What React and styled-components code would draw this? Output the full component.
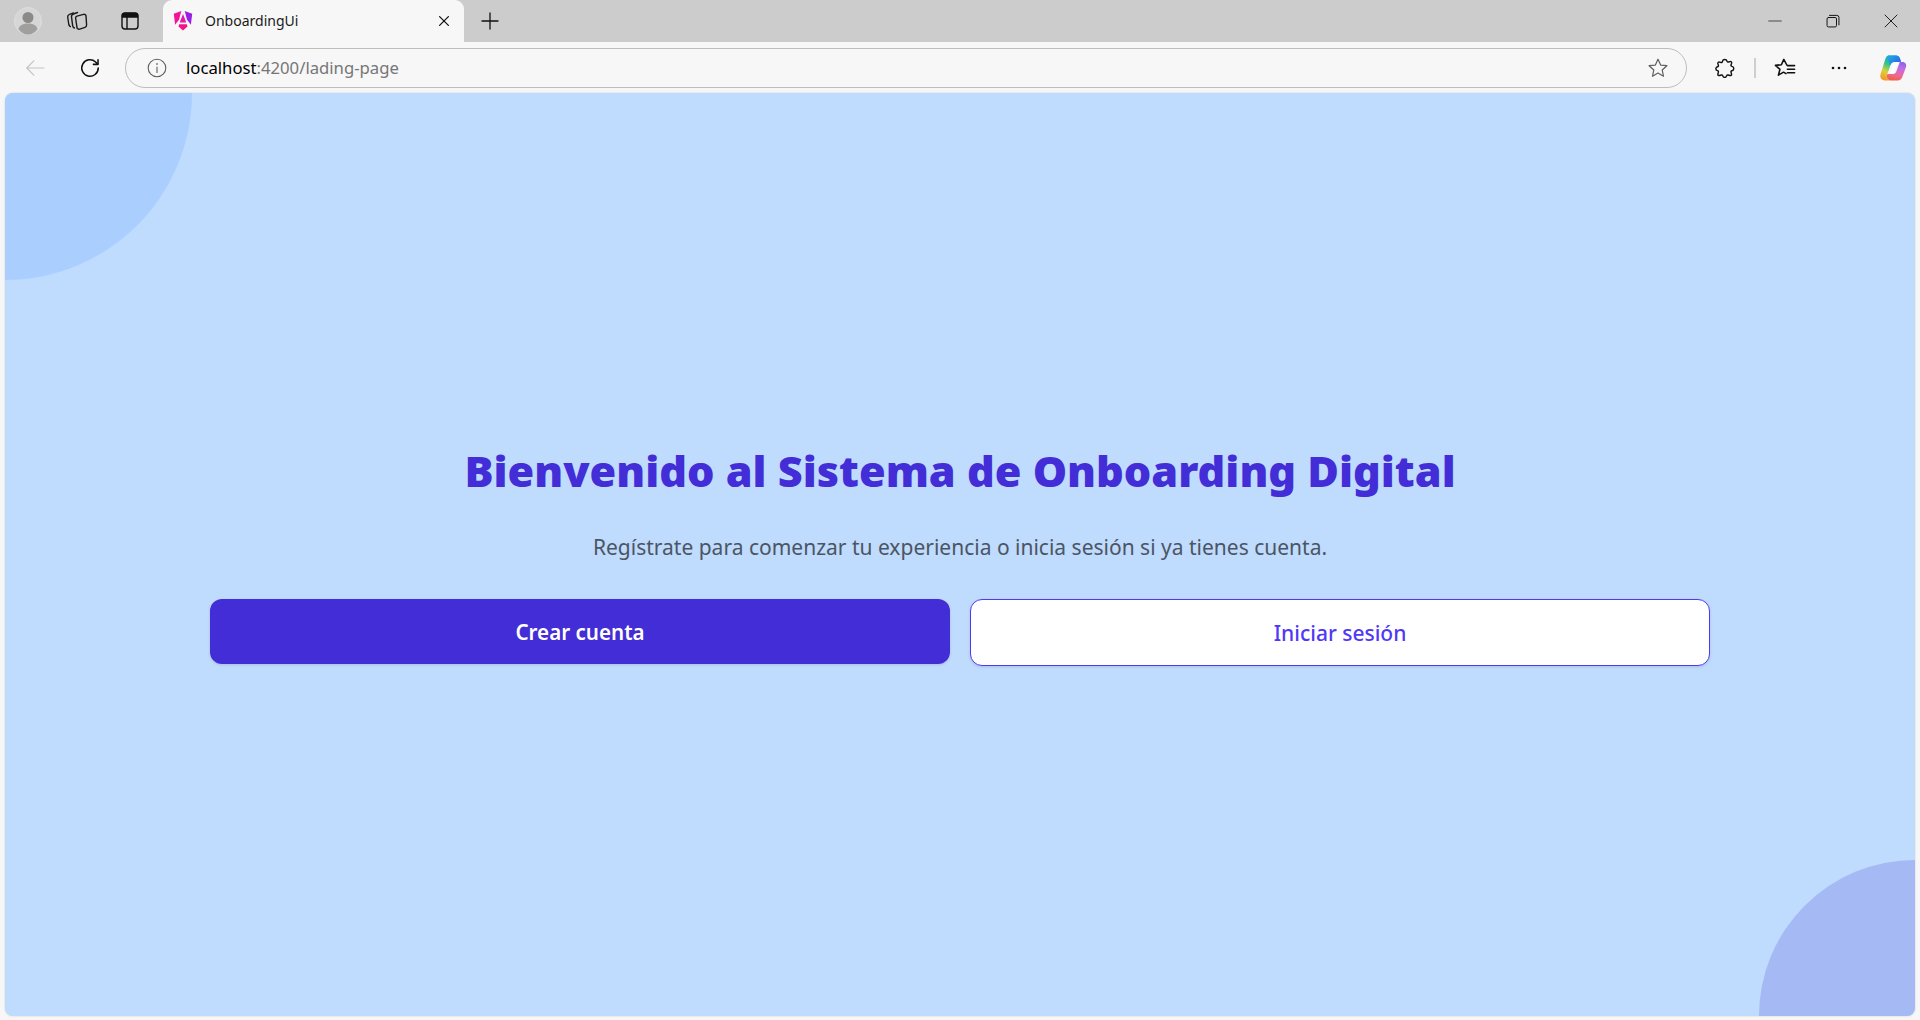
import React from "react";
import styled, { createGlobalStyle } from "styled-components";

const Global = createGlobalStyle`
  html, body { margin: 0; padding: 0; height: 100%; background: #f7f7f7; }
  #root { height: 100%; }
  * { box-sizing: border-box; }
`;

const Window = styled.div`
  height: 1020px;
  display: flex;
  flex-direction: column;
  overflow: hidden;
  font-family: "Noto Sans", "Open Sans", sans-serif;
`;

const TabStrip = styled.div`
  height: 42px;
  flex: none;
  display: flex;
  align-items: center;
  padding-left: 6px;
  background: #cccccc;
`;

const Slot = styled.div`
  width: ${(p) => p.$w}px;
  margin-left: ${(p) => p.$ml || 0}px;
  flex: none;
  display: flex;
  align-items: center;
  justify-content: center;
`;

const Tab = styled.div`
  width: 301px;
  height: 42px;
  margin-left: 7px;
  flex: none;
  display: flex;
  align-items: center;
  padding: 0 12px 1px 10px;
  background: #f7f7f7;
  border-radius: 9px 9px 0 0;
`;

const TabTitle = styled.span`
  flex: 1;
  margin-left: 12px;
  font-size: 14px;
  color: #1a1a1a;
`;

const Spacer = styled.div`
  flex: 1;
`;

const Toolbar = styled.div`
  height: 51px;
  flex: none;
  display: flex;
  align-items: center;
  padding: 1px 2px 0 12px;
  background: #f7f7f7;
`;

const AddressBar = styled.div`
  flex: 1;
  height: 40px;
  margin-left: 3px;
  display: flex;
  align-items: center;
  padding: 0 17px 0 21px;
  background: #f7f7f7;
  border: 1px solid #bdbdbd;
  border-radius: 20px;
`;

const Url = styled.div`
  flex: 1;
  margin-left: 19px;
  padding-bottom: 2px;
  font-size: 16.7px;
  color: #000;
`;

const UrlRest = styled.span`
  color: #767676;
`;

const Separator = styled.div`
  width: 2px;
  height: 20px;
  margin: 0 4px 0 4px;
  background: #cfcfcf;
`;

const Viewport = styled.main`
  position: relative;
  flex: 1;
  margin: 0 5px 4px;
  display: flex;
  flex-direction: column;
  align-items: center;
  justify-content: center;
  overflow: hidden;
  background: #bfdbfe;
  border-radius: 8px;
  box-shadow: 0 0 2px rgba(0, 0, 0, 0.18);
`;

const CornerTop = styled.div`
  position: absolute;
  left: -187px;
  top: -187px;
  width: 374px;
  height: 374px;
  border-radius: 50%;
  background: #aacffe;
`;

const CornerBottom = styled.div`
  position: absolute;
  right: -156px;
  bottom: -156px;
  width: 312px;
  height: 312px;
  border-radius: 50%;
  background: #a5b9f5;
`;

const Content = styled.section`
  position: relative;
  width: 1500px;
  padding-bottom: 2px;
  display: flex;
  flex-direction: column;
  align-items: center;
`;

const Title = styled.h1`
  margin: 0 0 30px;
  font-size: 43.2px;
  line-height: 60px;
  font-weight: 900;
  color: #432dd7;
`;

const Subtitle = styled.p`
  margin: 0 0 36px;
  font-size: 21px;
  line-height: 32px;
  color: #4b5563;
`;

const Buttons = styled.div`
  width: 100%;
  display: grid;
  grid-template-columns: 1fr 1fr;
  gap: 20px;
  align-items: start;
`;

const Button = styled.button`
  height: ${(p) => (p.$outline ? 67 : 65)}px;
  font-family: inherit;
  font-size: ${(p) => (p.$outline ? 21 : 20.6)}px;
  font-weight: ${(p) => (p.$outline ? 500 : 600)};
  color: ${(p) => (p.$outline ? "#4f39f6" : "#fff")};
  background: ${(p) => (p.$outline ? "#fff" : "#432dd7")};
  border: ${(p) => (p.$outline ? "1px solid #4f39f6" : "none")};
  border-radius: 12px;
  box-shadow: 0 1px 3px rgba(0, 0, 0, 0.12);
`;

const Icon = ({ size = 20, children, stroke = "#1a1a1a", sw = 1.4 }) => (
  <svg width={size} height={size} viewBox="0 0 20 20" fill="none" stroke={stroke} strokeWidth={sw} strokeLinecap="round" strokeLinejoin="round">
    {children}
  </svg>
);

const Avatar = () => (
  <svg width="28" height="28" viewBox="0 0 28 28">
    <circle cx="14" cy="14" r="13.5" fill="#d6d6d6" stroke="#dedede" />
    <circle cx="14" cy="10.5" r="5.5" fill="#8c8a88" />
    <path d="M4.5 22c1-4 5-5.500 9.500-5.500s8.500 1.500 9.500 5.500c-2 3.500-6 5.500-9.500 5.500s-7.500-2-9.500-5.500z" fill="#a19f9d" />
  </svg>
);

const AngularLogo = () => (
  <svg width="20" height="22" viewBox="0 0 20 22">
    <defs>
      <linearGradient id="ng" x1="0" y1="0.8" x2="1" y2="0.2">
        <stop offset="0" stopColor="#f5129a" />
        <stop offset="0.55" stopColor="#e01ab0" />
        <stop offset="1" stopColor="#8a1fec" />
      </linearGradient>
    </defs>
    <path d="M8.300 1 .8 3.800l1.300 11L6 9.800z" fill="#f5129a" />
    <path d="M11.700 1l7.500 2.800-1.300 11L14 9.800z" fill="#9a1fe6" />
    <path d="M10 4 13.300 12.500H6.700z" fill="url(#ng)" />
    <path d="M6.200 14.300h7.600l.7 2.200L10 20.500l-4.500-4z" fill="#f0138a" />
  </svg>
);

const Copilot = () => (
  <svg width="28" height="28" viewBox="0 0 28 28">
    <defs>
      <linearGradient id="cpLeft" x1="0.7" y1="0" x2="0.3" y2="1">
        <stop offset="0" stopColor="#1f9ae8" />
        <stop offset="0.4" stopColor="#2dc48c" />
        <stop offset="0.7" stopColor="#d8d23a" />
        <stop offset="1" stopColor="#f59a2a" />
      </linearGradient>
      <linearGradient id="cpRight" x1="0.6" y1="0" x2="0.4" y2="1">
        <stop offset="0" stopColor="#6a63e6" />
        <stop offset="0.4" stopColor="#c06be6" />
        <stop offset="0.75" stopColor="#ee6a9a" />
        <stop offset="1" stopColor="#f0603c" />
      </linearGradient>
      <linearGradient id="cpTop" x1="0" y1="0" x2="1" y2="0.6">
        <stop offset="0" stopColor="#1fb4e6" />
        <stop offset="1" stopColor="#2a6ae0" />
      </linearGradient>
    </defs>
    <path d="M10 1.500h7c2 0 3.200 1 3.800 2.800L22 8H15c-1.800 0-2.800 1-3.300 2.500L8 21c-.7 2.500.5 4.500 3 5.500H6.500C3 26.500 .5 24 1.500 20.500L6 6C6.800 3.200 8 1.500 10 1.500z" fill="url(#cpLeft)" />
    <path d="M10 1.500h7c2 0 3.200 1 3.800 2.800L22 8H15c-1.800 0-2.800 1-3.300 2.500L11 11C10 7 9 4 7.500 3 8.200 2 9 1.500 10 1.500z" fill="url(#cpTop)" />
    <path d="M21 4.500 22 8h1.500c2.800 0 4.300 2.400 3.500 5l-3.500 9.500c-.8 2.500-2.500 4-5 4H11c-2.500-1-3.700-3-3-5.500L8.500 20H14c1.800 0 2.800-1 3.300-2.500l3.500-9.500c.4-1.200.5-2.500.2-3.500z" fill="url(#cpRight)" />
    <path d="M15 9h3.500L14.500 19H11z" fill="#fff" />
  </svg>
);

export default function App() {
  return (
    <Window>
      <Global />
      <TabStrip>
        <Slot $w={44}>
          <Avatar />
        </Slot>
        <Slot $w={54}>
          <svg width="22" height="22" viewBox="0 0 22 22" fill="none" stroke="#1a1a1a" strokeWidth="1.4" strokeLinejoin="round" strokeLinecap="round">
            <path d="M7.500 3 3.500 4.300C2 4.900 1.500 5.800 1.700 7l1.100 7.500c.2 1 .7 1.700 1.600 2.100" />
            <path d="M11.500 2.500 7.500 4C6 4.600 5.300 5.500 5.500 6.800l1.200 9c.2 1 .8 1.800 1.700 2.200" />
            <path d="M11 6.200 17.500 4.400c1.200-.3 2.400 .3 2.500 1.500l.6 9c.1 1.200-.4 2-1.600 2.400l-5.300 1.800c-1.300 .4-2.500-.2-2.700-1.500L9.600 8c-.1-.9 .6-1.500 1.400-1.800z" />
          </svg>
        </Slot>
        <Slot $w={52}>
          <svg width="18" height="18" viewBox="0 0 18 18" fill="none" stroke="#111" strokeWidth="1.4">
            <rect x="1" y="1" width="16" height="16" rx="3" />
            <path d="M1.500 3.500a2 2 0 0 1 2-2h11a2 2 0 0 1 2 2V5h-15z" fill="#111" />
            <path d="M6 5v12" />
          </svg>
        </Slot>
        <Tab>
          <AngularLogo />
          <TabTitle>OnboardingUi</TabTitle>
          <Icon size={16} sw={1.6} stroke="#111">
            <path d="M4.500 4.500 15.500 15.500M15.500 4.500 4.500 15.500" />
          </Icon>
        </Tab>
        <Slot $w={52}>
          <Icon size={20} sw={1.3} stroke="#111">
            <path d="M10 2v16M2 10h16" />
          </Icon>
        </Slot>
        <Spacer />
        <Slot $w={58}>
          <Icon size={14} sw={1} stroke="#111">
            <path d="M1 10h18" />
          </Icon>
        </Slot>
        <Slot $w={58}>
          <Icon size={14} sw={1.4} stroke="#111">
            <rect x="1.500" y="5" width="13.500" height="13.500" rx="2" />
            <path d="M5 2h10.500a3 3 0 0 1 3 3v10.500" />
          </Icon>
        </Slot>
        <Slot $w={58}>
          <Icon size={14} sw={1.3} stroke="#111">
            <path d="M1.500 1.500 18.500 18.500M18.500 1.500 1.500 18.500" />
          </Icon>
        </Slot>
      </TabStrip>
      <Toolbar>
        <Slot $w={46}>
          <Icon size={22} sw={1.1} stroke="#c4c4c4">
            <path d="M18 10H2.500M9 3.500 2.500 10 9 16.500" />
          </Icon>
        </Slot>
        <Slot $w={64}>
          <Icon size={22} sw={1.4} stroke="#111">
            <path d="M17.500 10a7.500 7.500 0 1 1-2.400-5.500L17 6.500" />
            <path d="M17.300 2.500v4.200h-4.200" />
          </Icon>
        </Slot>
        <AddressBar>
          <Icon size={20} sw={1.1} stroke="#5f5f5f">
            <circle cx="10" cy="10" r="8.800" />
            <path d="M10 9v5.500" />
            <path d="M10 5.800v.4" strokeWidth="1.500" />
          </Icon>
          <Url>
            localhost<UrlRest>:4200/lading-page</UrlRest>
          </Url>
          <Icon size={22} sw={1.1} stroke="#5f5f5f">
            <path d="m10 2 2.400 5.300 5.700.6-4.300 3.900 1.200 5.700-5-2.900-5 2.900 1.200-5.700-4.300-3.900 5.700-.6z" />
          </Icon>
        </AddressBar>
        <Slot $w={50} $ml={13}>
          <svg width="20" height="20" viewBox="0 0 20 20" fill="none" stroke="#111" strokeWidth="1.4" strokeLinejoin="round">
            <path d="M7.500 3.200C8 1 11.500 1 12 3.200c.2 .8 .8 1 1.500 .8l1.500-.4c1.200-.3 1.900 .5 1.600 1.600L16 7c-.2 .8 .2 1.200 1 1.400 2.400 .5 2.400 3.800 0 4.300-.8 .2-1.200 .7-1 1.400l.5 1.800c.3 1.100-.5 1.900-1.600 1.600l-1.900-.5c-.7-.2-1.200 .2-1.400 .9-.5 2-3.300 2-3.800 0-.2-.7-.7-1.100-1.400-.9l-1.900 .5c-1.100 .3-1.900-.5-1.600-1.600l.5-1.800c.2-.7-.2-1.200-.9-1.400-2.200-.6-2.200-3.300 0-3.900 .7-.2 1.100-.7 .9-1.400l-.5-1.700c-.3-1.100 .5-1.900 1.600-1.600l1.600 .4c.7 .2 1.200-.1 1.400-.9z" />
          </svg>
        </Slot>
        <Separator />
        <Slot $w={50}>
          <Icon size={24} sw={1.3} stroke="#111">
            <path d="M11.500 7.500 9 2.800 7 7.300l-5 .5 3.800 3.300L4.500 16l4.300-2.500 2 1.200" />
            <path d="M12 8h6M12 11h6M12 14h6" />
          </Icon>
        </Slot>
        <Slot $w={50} $ml={4}>
          <svg width="16" height="4" viewBox="0 0 16 4" fill="#111">
            <circle cx="2" cy="2" r="1.300" />
            <circle cx="8" cy="2" r="1.300" />
            <circle cx="14" cy="2" r="1.300" />
          </svg>
        </Slot>
        <Slot $w={50} $ml={4}>
          <Copilot />
        </Slot>
      </Toolbar>
      <Viewport>
        <CornerTop />
        <CornerBottom />
        <Content>
          <Title>Bienvenido al Sistema de Onboarding Digital</Title>
          <Subtitle>Regístrate para comenzar tu experiencia o inicia sesión si ya tienes cuenta.</Subtitle>
          <Buttons>
            <Button>Crear cuenta</Button>
            <Button $outline>Iniciar sesión</Button>
          </Buttons>
        </Content>
      </Viewport>
    </Window>
  );
}
